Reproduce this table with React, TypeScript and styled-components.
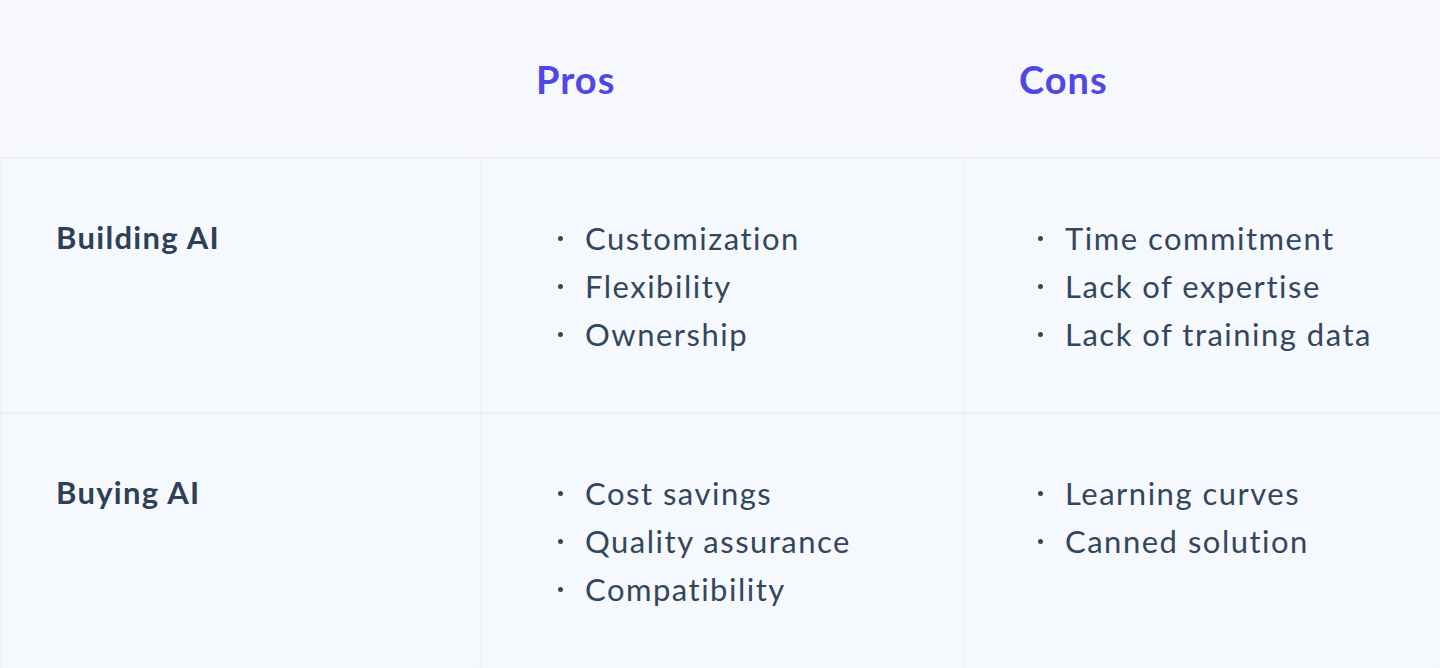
import React from "react"
import styled, { createGlobalStyle } from "styled-components"

const GlobalStyle = createGlobalStyle`
  html, body {
    margin: 0;
    padding: 0;
    background: #f7f8fd;
  }
  body {
    font-family: "Lato", "Open Sans", sans-serif;
    -webkit-font-smoothing: antialiased;
  }
`

type Row = {
  label: string
  pros: string[]
  cons: string[]
}

const rows: Row[] = [
  {
    label: "Building AI",
    pros: ["Customization", "Flexibility", "Ownership"],
    cons: ["Time commitment", "Lack of expertise", "Lack of training data"],
  },
  {
    label: "Buying AI",
    pros: ["Cost savings", "Quality assurance", "Compatibility"],
    cons: ["Learning curves", "Canned solution"],
  },
]

const Table = styled.div`
  display: grid;
  grid-template-columns: 480px 483px 477px;
  grid-template-rows: 157px 255px 256px;
  width: 1440px;
  height: 668px;
  background: #f7f8fd;
`

const HeadCell = styled.div`
  display: flex;
  align-items: center;
  padding-left: 56px;
`

const HeadTitle = styled.h2`
  margin: 0;
  font-size: 38px;
  font-weight: 700;
  color: #5048e6;
  letter-spacing: 1px;
`

const Cell = styled.div<{ $first?: boolean; $last?: boolean }>`
  background: #f5f9fe;
  border-top: 1px solid #eceef8;
  border-left: 1px solid #f0f2f9;
  box-shadow: inset 0 1px 2px rgba(220, 224, 240, 0.35);
  padding: ${(p) => (p.$first ? "60px 0 0 55px" : p.$last ? "62px 0 0 74px" : "62px 0 0 77px")};
`

const Label = styled.div`
  font-size: 31px;
  font-weight: 700;
  color: #2f4055;
  line-height: 38px;
  letter-spacing: 1.3px;
`

const List = styled.ul`
  list-style: none;
  margin: 0;
  padding: 0;
  display: flex;
  flex-direction: column;
  gap: 12px;
`

const Item = styled.li`
  display: flex;
  align-items: center;
  font-size: 31px;
  color: #34465b;
  line-height: 36px;
  letter-spacing: 1.5px;

  &::before {
    content: "";
    width: 5px;
    height: 5px;
    border-radius: 50%;
    background: #34465b;
    margin-right: 22px;
    flex: none;
  }
`

export default function App() {
  return (
    <>
      <GlobalStyle />
      <Table>
        <HeadCell />
        <HeadCell>
          <HeadTitle>Pros</HeadTitle>
        </HeadCell>
        <HeadCell>
          <HeadTitle>Cons</HeadTitle>
        </HeadCell>
        {rows.map((row) => (
          <React.Fragment key={row.label}>
            <Cell $first>
              <Label>{row.label}</Label>
            </Cell>
            <Cell>
              <List>
                {row.pros.map((p) => (
                  <Item key={p}>{p}</Item>
                ))}
              </List>
            </Cell>
            <Cell $last>
              <List>
                {row.cons.map((c) => (
                  <Item key={c}>{c}</Item>
                ))}
              </List>
            </Cell>
          </React.Fragment>
        ))}
      </Table>
    </>
  )
}
